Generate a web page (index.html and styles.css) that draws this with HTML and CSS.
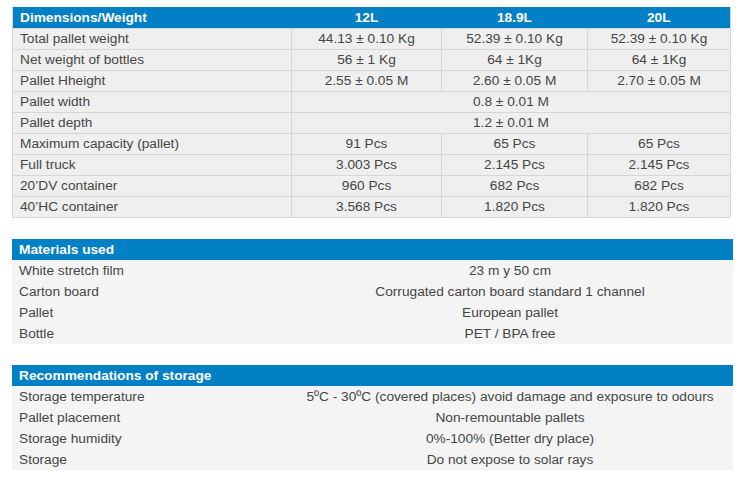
FILE: index.html
```html
<!DOCTYPE html>
<html>
<head>
<meta charset="utf-8">
<link rel="stylesheet" href="styles.css">
</head>
<body>
<div class="page">
  <table class="spec">
    <colgroup>
      <col class="c1"><col class="c2"><col class="c3"><col class="c4">
    </colgroup>
    <thead>
      <tr><th class="lbl">Dimensions/Weight</th><th>12L</th><th>18.9L</th><th>20L</th></tr>
    </thead>
    <tbody>
      <tr><td class="lbl">Total pallet weight</td><td>44.13 ± 0.10 Kg</td><td>52.39 ± 0.10 Kg</td><td>52.39 ± 0.10 Kg</td></tr>
      <tr><td class="lbl">Net weight of bottles</td><td>56 ± 1 Kg</td><td>64 ± 1Kg</td><td>64 ± 1Kg</td></tr>
      <tr><td class="lbl">Pallet Hheight</td><td>2.55 ± 0.05 M</td><td>2.60 ± 0.05 M</td><td>2.70 ± 0.05 M</td></tr>
      <tr><td class="lbl">Pallet width</td><td colspan="3">0.8 ± 0.01 M</td></tr>
      <tr><td class="lbl">Pallet depth</td><td colspan="3">1.2 ± 0.01 M</td></tr>
      <tr><td class="lbl">Maximum capacity (pallet)</td><td>91 Pcs</td><td>65 Pcs</td><td>65 Pcs</td></tr>
      <tr><td class="lbl">Full truck</td><td>3.003 Pcs</td><td>2.145 Pcs</td><td>2.145 Pcs</td></tr>
      <tr><td class="lbl">20’DV container</td><td>960 Pcs</td><td>682 Pcs</td><td>682 Pcs</td></tr>
      <tr><td class="lbl">40’HC container</td><td>3.568 Pcs</td><td>1.820 Pcs</td><td>1.820 Pcs</td></tr>
    </tbody>
  </table>

  <table class="plain">
    <colgroup><col class="p1"><col></colgroup>
    <thead><tr><th colspan="2" class="lbl">Materials used</th></tr></thead>
    <tbody>
      <tr><td class="lbl">White stretch film</td><td>23 m y 50 cm</td></tr>
      <tr><td class="lbl">Carton board</td><td>Corrugated carton board standard 1 channel</td></tr>
      <tr><td class="lbl">Pallet</td><td>European pallet</td></tr>
      <tr><td class="lbl">Bottle</td><td>PET / BPA free</td></tr>
    </tbody>
  </table>

  <table class="plain">
    <colgroup><col class="p1"><col></colgroup>
    <thead><tr><th colspan="2" class="lbl">Recommendations of storage</th></tr></thead>
    <tbody>
      <tr><td class="lbl">Storage temperature</td><td>5ºC - 30ºC (covered places) avoid damage and exposure to odours</td></tr>
      <tr><td class="lbl">Pallet placement</td><td>Non-remountable pallets</td></tr>
      <tr><td class="lbl">Storage humidity</td><td>0%-100% (Better dry place)</td></tr>
      <tr><td class="lbl">Storage</td><td>Do not expose to solar rays</td></tr>
    </tbody>
  </table>
  <p class="more">Access to the technical sheet of the product</p>
</div>
</body>
</html>
```

FILE: styles.css
```css
html, body {
  margin: 0;
  padding: 0;
  background: #ffffff;
}
body {
  font-family: "Liberation Sans", Arial, sans-serif;
  font-size: 13.7px;
  color: #464646;
  overflow: hidden;
  height: 479px;
}
.page {
  padding: 6px 0 0 12px;
}
table {
  border-collapse: collapse;
  table-layout: fixed;
}
th, td {
  padding: 0;
  height: 20px;
  line-height: 20px;
  white-space: nowrap;
  text-align: center;
}
th {
  background: #0180c6;
  color: #ffffff;
  font-weight: bold;
}
.lbl {
  text-align: left;
  padding-left: 7px;
}
.spec {
  width: 718px;
  border: 1px solid #d8d8d8;
  border-top: none;
}
.spec .c1 { width: 279px; }
.spec .c2 { width: 150px; }
.spec .c3 { width: 146px; }
.spec .c4 { width: 143px; }
.spec th {
  height: 21px;
  line-height: 21px;
  border-top: 1px solid #ffffff;
}
.spec td {
  background: #efefef;
  border: 1px solid #d6d6d6;
}
.plain {
  width: 721px;
  margin-top: 21px;
}
.plain .p1 { width: 275px; }
.plain th {
  height: 21px;
  line-height: 21px;
}
.plain td {
  background: #f4f4f4;
  height: 21px;
  line-height: 21px;
}
.more {
  margin: 4px 0 0 7px;
  color: #0180c6;
  line-height: 20px;
}
```
